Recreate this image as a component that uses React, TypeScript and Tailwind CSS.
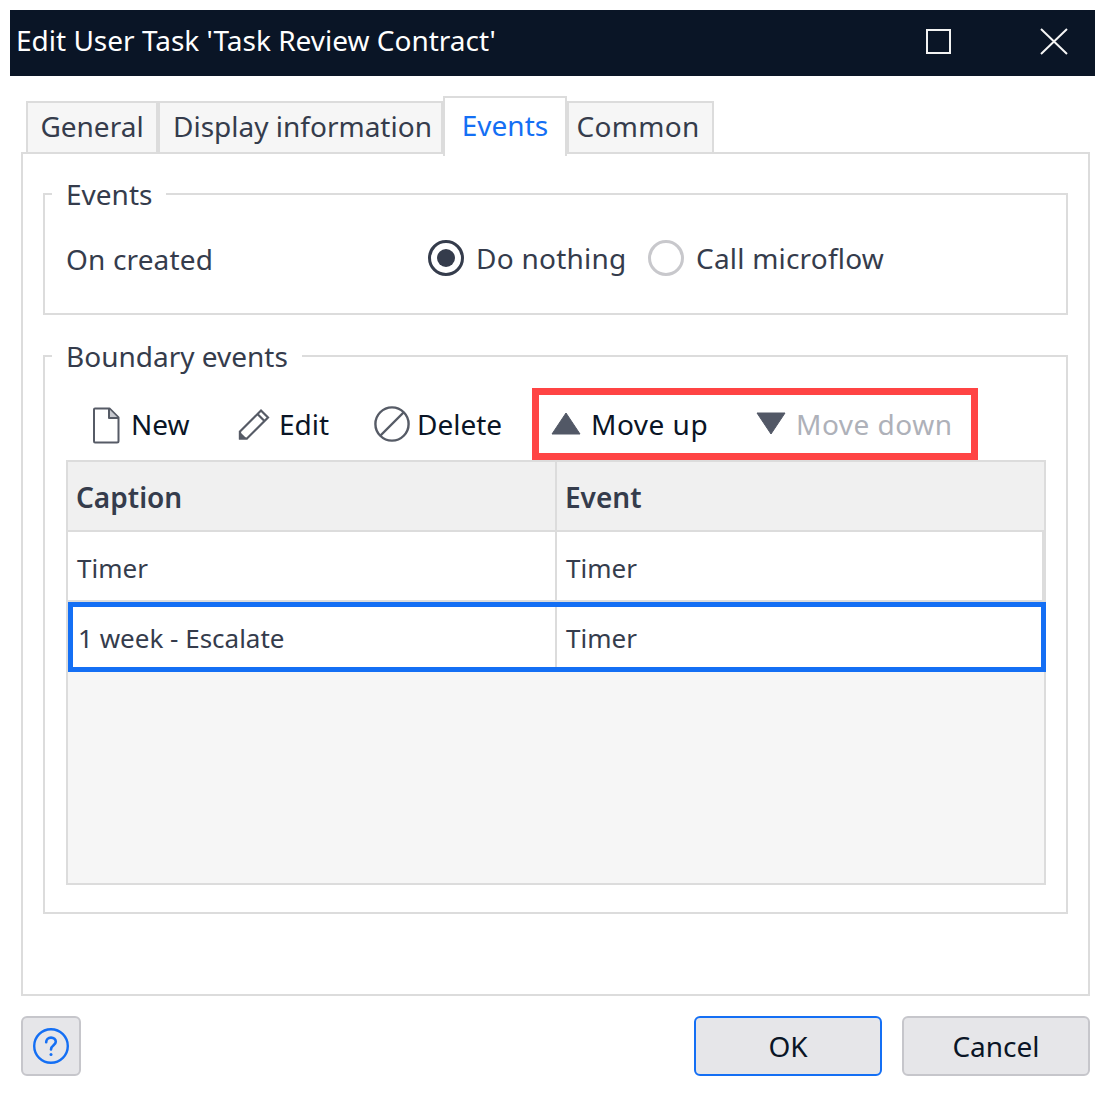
import React from "react";

const tabs = [
  { name: "General", box: "w-[132px]" },
  { name: "Display information", box: "w-[285px] pl-[4px]" },
  { name: "Events", box: "w-[124px]" },
  { name: "Common", box: "w-[147px] pr-[5px] tracking-[0.3px]" },
];

// Toolbar icons, drawn to match the dialog's glyphs
const NewIcon = () => (
  <svg width="28" height="37" viewBox="0 0 28 37" fill="none" stroke="#565b66" strokeWidth="2" strokeLinejoin="round">
    <path d="M2 2.5C2 1.9 2.4 1.5 3 1.5H17.5L26.5 10.5V34C26.5 34.8 26 35.5 25 35.5H3C2.4 35.5 2 35 2 34.2Z" />
    <path d="M17 2V11H26" fill="#c8cad0" />
  </svg>
);

const EditIcon = () => (
  <svg width="32" height="33" viewBox="0 0 32 33" fill="none" stroke="#565b66" strokeWidth="2.2">
    <path d="M2 23.5L23 2.5L30 9.5L9 30.5H2Z" strokeLinejoin="miter" />
    <path d="M19.5 6L26.5 13" />
    <path d="M2 25.5L7 30.5H2Z" fill="#565b66" />
  </svg>
);

const DeleteIcon = () => (
  <svg width="36" height="36" viewBox="0 0 36 36" fill="none" stroke="#565b66" strokeWidth="2.4">
    <circle cx="18" cy="18" r="16.6" />
    <path d="M6.5 29.5L29.5 6.5" />
  </svg>
);

const UpIcon = () => (
  <svg width="30" height="23" viewBox="0 0 30 23">
    <path d="M15 1L29 22H1Z" fill="#525866" stroke="#525866" strokeWidth="1" strokeLinejoin="round" />
  </svg>
);

const DownIcon = () => (
  <svg width="30" height="23" viewBox="0 0 30 23">
    <path d="M1 1H29L15 22Z" fill="#525866" stroke="#525866" strokeWidth="1" strokeLinejoin="round" />
  </svg>
);

function Group({ title, className, children }: { title: string; className: string; children: React.ReactNode }) {
  return (
    <fieldset className={`border-2 border-[#dcdcdc] mx-[20px] ${className}`}>
      <legend className="ml-[7px] px-[14px] text-[28px] leading-[38px] text-[#353c4c]">{title}</legend>
      {children}
    </fieldset>
  );
}

export default function App() {
  return (
    <div className="w-[1105px] h-[1103px] bg-white p-[10px] font-['Noto_Sans','Open_Sans',sans-serif] overflow-hidden">
      {/* Title bar */}
      <div className="h-[66px] bg-[#0a1526] flex items-center pl-[6px] text-white">
        <span className="text-[28px] leading-none flex-1 mt-[-6px]">Edit User Task 'Task Review Contract'</span>
        <span className="w-[25px] h-[25px] border-2 border-[#f2f2f2] mr-[89px] mt-[-4px]"></span>
        <svg width="28" height="27" viewBox="0 0 28 27" className="mr-[27px] mt-[-4px]" stroke="#f5f5f5" strokeWidth="2">
          <path d="M1 1L27 26M27 1L1 26" />
        </svg>
      </div>

      <div className="pl-[11px] pr-[5px]">
        {/* Tabs */}
        <div className="flex h-[78px] items-end pl-[5px] relative z-10 mb-[-2px]">
          {tabs.map((t) =>
            t.name === "Events" ? (
              <div key={t.name} className={`${t.box} h-[60px] mb-[-2px] bg-white border-2 border-b-0 border-[#dcdcdc] pt-[8px] text-center text-[28px] leading-[38px] text-[#146ff4]`}>
                {t.name}
              </div>
            ) : (
              <div key={t.name} className={`${t.box} h-[53px] bg-[#f6f6f6] border-2 border-[#dcdcdc] pt-[4px] text-center text-[28px] leading-[38px] text-[#353c4c]`}>
                {t.name}
              </div>
            )
          )}
        </div>

        {/* Tab panel */}
        <div className="h-[844px] border-2 border-[#dcdcdc] pt-[21px]">
          <Group title="Events" className="h-[140px]">
            <div className="flex items-center h-[60px] mt-[15px] pl-[21px] text-[28px] text-[#353c4c]">
              <span className="w-[362px] mt-[2px] tracking-[0.15px]">On created</span>
              <span className="w-[36px] h-[36px] rounded-full border-[3px] border-[#353c4c] flex items-center justify-center mr-[12px]">
                <span className="w-[18px] h-[18px] rounded-full bg-[#353c4c]"></span>
              </span>
              <span className="w-[172px] tracking-[0.25px]">Do nothing</span>
              <span className="w-[36px] h-[36px] rounded-full border-[3px] border-[#c8c8cc] mr-[12px]"></span>
              <span className="tracking-[0.2px]">Call microflow</span>
            </div>
          </Group>

          <Group title="Boundary events" className="h-[577px] mt-[22px]">
            <div className="pl-[21px] pr-[20px]">
              {/* Toolbar */}
              <div className="flex items-center h-[72px] mt-[13px] text-[28px] text-[#0a1526]">
                <span className="ml-[26px] mt-[2px]"><NewIcon /></span>
                <span className="ml-[11px] w-[107px]">New</span>
                <EditIcon />
                <span className="ml-[9px] w-[95px]">Edit</span>
                <DeleteIcon />
                <span className="ml-[7px] w-[115px]">Delete</span>
                <div className="h-[72px] w-[446px] shrink-0 border-[7px] border-[#ff4444] flex items-center">
                  <span className="ml-[12px] mt-[-2px]"><UpIcon /></span>
                  <span className="ml-[10px] w-[165px] tracking-[0.5px]">Move up</span>
                  <span className="mt-[-2px]"><DownIcon /></span>
                  <span className="ml-[10px] tracking-[0.5px] text-[#aeb1b9]">Move down</span>
                </div>
              </div>

              {/* Table */}
              <div className="h-[425px] border-2 border-[#dcdcdc] bg-[#f6f6f6] text-[#353c4c]">
                <div className="grid grid-cols-[489px_1fr] h-[70px] bg-[#f0f0f0] border-b-2 border-[#dcdcdc] text-[28px] font-semibold">
                  <div className="pl-[8px] pt-[2px] border-r-2 border-[#dcdcdc] flex items-center">Caption</div>
                  <div className="pl-[8px] pt-[2px] flex items-center">Event</div>
                </div>
                <div className="grid grid-cols-[489px_1fr] h-[70px] bg-white border-b-2 border-[#dcdcdc] text-[26px]">
                  <div className="pl-[9px] pt-[4px] border-r-2 border-[#dcdcdc] flex items-center">Timer</div>
                  <div className="pl-[9px] pt-[4px] border-r-2 border-[#dcdcdc] flex items-center">Timer</div>
                </div>
                <div className="grid grid-cols-[484px_1fr] h-[70px] mr-[-2px] bg-white border-[5px] border-[#146ff4] text-[26px]">
                  <div className="pl-[5px] pt-[2px] border-r-2 border-[#dcdcdc] flex items-center">1 week - Escalate</div>
                  <div className="pl-[9px] pt-[2px] flex items-center">Timer</div>
                </div>
              </div>
            </div>
          </Group>
        </div>

        {/* Footer buttons */}
        <div className="flex items-center mt-[20px] text-[28px] text-[#0a1526]">
          <button className="w-[60px] h-[60px] rounded-[6px] bg-[#e6e6e9] border-2 border-[#c6c6cb] flex items-center justify-center">
            <svg width="36" height="36" viewBox="0 0 36 36" fill="none" stroke="#146ff4" strokeWidth="2.4" strokeLinecap="round">
              <circle cx="18" cy="18" r="16.8" />
              <path d="M13.2 14.2C13.2 11.4 15.2 9.6 18 9.6C20.8 9.6 22.8 11.4 22.8 13.8C22.8 17.2 18 17.4 18 21.4" strokeWidth="2.6" />
              <circle cx="18" cy="26.4" r="1.5" fill="#146ff4" stroke="none" />
            </svg>
          </button>
          <button className="ml-auto w-[188px] h-[60px] rounded-[6px] bg-[#e6e6e9] border-2 border-[#146ff4]">OK</button>
          <button className="ml-[20px] w-[188px] h-[60px] rounded-[6px] bg-[#e6e6e9] border-2 border-[#c6c6cb]">Cancel</button>
        </div>
      </div>
    </div>
  );
}
